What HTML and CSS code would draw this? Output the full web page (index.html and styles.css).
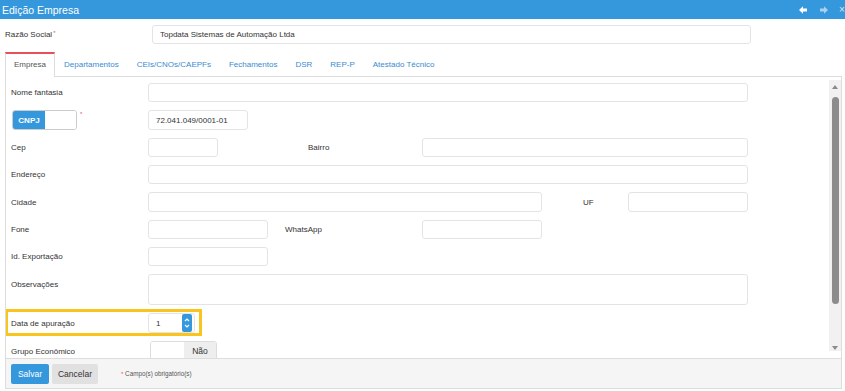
FILE: index.html
```html
<!DOCTYPE html>
<html lang="pt-BR">
<head>
<meta charset="utf-8">
<title>Edição Empresa</title>
<link rel="stylesheet" href="styles.css">
</head>
<body>
<div class="header">
  <span class="title">Edição Empresa</span>
  <div class="hicons">
    <svg class="harrow" viewBox="0 0 8 8" width="8" height="8"><path d="M0 4 L4 0.2 L4 2.6 L8 2.6 L8 5.4 L4 5.4 L4 7.8 Z" fill="#fff"/></svg>
    <svg class="harrow dim" viewBox="0 0 8 8" width="8" height="8"><path d="M8 4 L4 0.2 L4 2.6 L0 2.6 L0 5.4 L4 5.4 L4 7.8 Z" fill="#a9d1f0"/></svg>
    <span class="close">×</span>
  </div>
</div>
<div class="main">
  <div class="razao">
    <label class="rlabel">Razão Social<span class="req">*</span></label>
    <div class="input w599">Topdata Sistemas de Automação Ltda</div>
  </div>
  <ul class="tabs">
    <li class="tab active">Empresa</li>
    <li class="tab">Departamentos</li>
    <li class="tab">CEIs/CNOs/CAEPFs</li>
    <li class="tab">Fechamentos</li>
    <li class="tab">DSR</li>
    <li class="tab">REP-P</li>
    <li class="tab">Atestado Técnico</li>
  </ul>
  <div class="panel">
    <div class="content">
      <div class="row"><span class="lbl">Nome fantasia</span><div class="input w600"></div></div>
      <div class="row h20">
        <span class="lbl"><span class="cnpj"><span class="cnpj-on">CNPJ</span><span class="cnpj-off"></span></span><span class="req star">*</span></span>
        <div class="input w100 h20">72.041.049/0001-01</div>
      </div>
      <div class="row">
        <span class="lbl">Cep</span><div class="input w70"></div>
        <span class="lbl2 bairro">Bairro</span><div class="input w326"></div>
      </div>
      <div class="row"><span class="lbl">Endereço</span><div class="input w600"></div></div>
      <div class="row h20">
        <span class="lbl">Cidade</span><div class="input w394 h20"></div>
        <span class="lbl2 uf">UF</span><div class="input w120 h20"></div>
      </div>
      <div class="row">
        <span class="lbl">Fone</span><div class="input w120"></div>
        <span class="lbl2 whats">WhatsApp</span><div class="input w120"></div>
      </div>
      <div class="row"><span class="lbl">Id. Exportação</span><div class="input w120"></div></div>
      <div class="row obs"><span class="lbl top">Observações</span><div class="input w600 h31"></div></div>
      <div class="highlight">
        <span class="lbl">Data de apuração</span>
        <div class="input num">
          <span class="numval">1</span>
          <span class="spin">
            <svg viewBox="0 0 8 14" width="8" height="14"><path d="M2 5 L4 3 L6 5" fill="none" stroke="#fff" stroke-width="1.2"/><path d="M2 9 L4 11 L6 9" fill="none" stroke="#fff" stroke-width="1.2"/></svg>
          </span>
        </div>
      </div>
      <div class="row grupo">
        <span class="lbl">Grupo Econômico</span>
        <div class="toggle"><span class="toff"></span><span class="ton">Não</span></div>
      </div>
    </div>
    <div class="sbar">
      <span class="sup"></span>
      <span class="thumb"></span>
      <span class="sdown"></span>
    </div>
  </div>
  <div class="footer">
    <span class="btn primary">Salvar</span>
    <span class="btn default">Cancelar</span>
    <span class="note"><span class="req">*</span> Campo(s) obrigatório(s)</span>
  </div>
</div>
</body>
</html>
```
FILE: styles.css
```css
html, body {
  margin: 0;
  padding: 0;
}
body {
  width: 845px;
  height: 391px;
  overflow: hidden;
  background: #fff;
  font-family: "Liberation Sans", Arial, sans-serif;
  font-size: 8px;
  color: #333;
}
.header {
  width: 845px;
  height: 19px;
  background: #3598dc;
  display: flex;
  align-items: center;
  justify-content: space-between;
  padding-left: 2px;
  box-sizing: border-box;
}
.title {
  color: #fff;
  font-size: 10.5px;
}
.hicons {
  display: flex;
  align-items: center;
}
.harrow {
  display: block;
  margin-right: 13px;
}
.harrow.dim {
  margin-right: 11px;
}
.close {
  width: 6px;
  color: #d6e9f7;
  font-size: 10px;
  line-height: 10px;
}
.main {
  width: 837px;
  margin-left: 5px;
}
.razao {
  display: flex;
  align-items: center;
  margin-top: 6px;
  height: 19px;
}
.rlabel {
  width: 147px;
  flex: none;
}
.req {
  color: #e7505a;
  font-size: 6px;
  vertical-align: top;
  margin-left: 1px;
}
.input {
  box-sizing: border-box;
  height: 19px;
  border: 1px solid #e4e4e4;
  border-radius: 3px;
  background: #fff;
  padding-left: 7px;
  display: flex;
  align-items: center;
  flex: none;
  color: #333;
}
.w599 { width: 599px; }
.w600 { width: 600px; }
.w100 { width: 100px; }
.w70 { width: 70px; }
.w326 { width: 326px; }
.w394 { width: 394px; }
.w120 { width: 120px; }
.h20 { height: 20px; }
.h31 { height: 31px; }
.tabs {
  list-style: none;
  margin: 8px 0 0;
  padding: 0;
  display: flex;
  height: 24px;
  border-bottom: 1px solid #ddd;
}
.tab {
  box-sizing: border-box;
  height: 24px;
  border: 1px solid transparent;
  border-top: 2px solid transparent;
  border-bottom: none;
  padding: 0 8px;
  line-height: 21px;
  color: #3a8bd0;
}
.tab.active {
  height: 25px;
  margin-bottom: -1px;
  border-color: #ddd;
  border-top-color: #e7505a;
  background: #fff;
  color: #555;
  position: relative;
}
.panel {
  box-sizing: border-box;
  height: 281px;
  padding-top: 3px;
  border-left: 1px solid #ddd;
  border-right: 1px solid #ddd;
  display: flex;
  overflow: hidden;
}
.content {
  flex: 1;
  padding: 3px 0 0 5px;
  overflow: hidden;
}
.row {
  display: flex;
  align-items: center;
  height: 19px;
  margin-bottom: 8px;
}
.row.h20 { height: 20px; }
.row.obs {
  height: 31px;
  margin-bottom: 4px;
}
.lbl {
  width: 137px;
  flex: none;
  display: flex;
  align-items: center;
}
.lbl.top {
  align-self: flex-start;
  margin-top: 6px;
}
.lbl2 {
  flex: none;
}
.bairro { margin-left: 90px; width: 114px; }
.uf { margin-left: 41px; width: 45px; }
.whats { margin-left: 17px; width: 137px; }
.cnpj {
  box-sizing: border-box;
  width: 65px;
  height: 20px;
  border: 1px solid #ccc;
  border-radius: 3px;
  display: flex;
  overflow: hidden;
  margin-left: 1px;
}
.cnpj-on {
  width: 32px;
  background: #3598dc;
  color: #fff;
  font-weight: bold;
  display: flex;
  align-items: center;
  justify-content: center;
}
.cnpj-off {
  flex: 1;
  background: #fff;
}
.star {
  align-self: flex-start;
  margin-left: 3px;
  margin-top: 1px;
}
.highlight {
  margin-left: -6px;
  width: fit-content;
  display: flex;
  align-items: center;
  border: 3px solid #f9c41c;
  padding: 1px 4px 0 3px;
  margin-bottom: 5px;
}
.num {
  width: 47px;
  height: 20px;
  padding-right: 2px;
}
.numval {
  flex: 1;
}
.spin {
  width: 10px;
  height: 18px;
  background: #3598dc;
  border-radius: 2px;
  display: flex;
  align-items: center;
  justify-content: center;
}
.spin svg { display: block; }
.grupo { height: 20px; }
.toggle {
  box-sizing: border-box;
  width: 67px;
  height: 20px;
  margin-left: 2px;
  border: 1px solid #ddd;
  border-radius: 3px;
  display: flex;
  overflow: hidden;
}
.toff {
  width: 33px;
  background: #fff;
}
.ton {
  flex: 1;
  background: #eee;
  display: flex;
  align-items: center;
  justify-content: center;
  color: #333;
  font-size: 8.5px;
}
.sbar {
  width: 12px;
  flex: none;
  background: #f1f1f1;
  display: flex;
  flex-direction: column;
  align-items: center;
  margin-bottom: 7px;
}
.sup {
  margin-top: 5px;
  width: 0;
  height: 0;
  border-left: 3.5px solid transparent;
  border-right: 3.5px solid transparent;
  border-bottom: 4px solid #8a8a8a;
}
.thumb {
  margin-top: 8px;
  width: 7px;
  height: 207px;
  background: #8c8c8c;
  border-radius: 3.5px;
}
.sdown {
  margin-top: auto;
  margin-bottom: 1px;
  width: 0;
  height: 0;
  border-left: 3.5px solid transparent;
  border-right: 3.5px solid transparent;
  border-top: 4px solid #8a8a8a;
}
.footer {
  box-sizing: border-box;
  height: 31px;
  border: 1px solid #ddd;
  background: #f5f5f5;
  display: flex;
  align-items: center;
  padding-left: 5px;
}
.btn {
  box-sizing: border-box;
  height: 20px;
  border-radius: 2px;
  display: flex;
  align-items: center;
  justify-content: center;
  font-size: 8.5px;
}
.primary {
  width: 38px;
  background: #3598dc;
  color: #fff;
}
.default {
  width: 46px;
  margin-left: 3px;
  background: #e1e1e1;
  color: #333;
}
.note {
  margin-left: 22px;
  font-size: 6.3px;
  color: #555;
}
.note .req {
  font-size: 6px;
  vertical-align: baseline;
}
```
